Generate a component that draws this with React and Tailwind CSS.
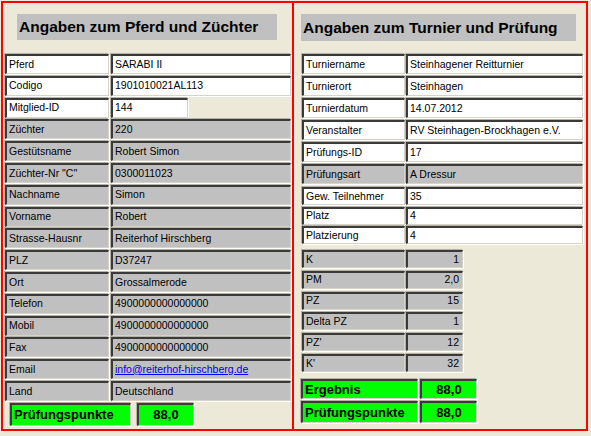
/**
 * Turnier-Ergebnisblatt — zwei Panels: Pferd/Züchter links, Turnier/Prüfung rechts.
 */

const Inset = ({ className = '', children }) => (
  <div
    className={`flex items-center overflow-hidden whitespace-nowrap border-t-2 border-l-2 border-r border-b border-t-[#3a3a3a] border-l-[#3a3a3a] border-r-[#d6d3c8] border-b-[#d6d3c8] shadow-[1px_1px_0_#ffffff,-1px_-1px_0_#b5b2a8] ${className}`}
  >
    {children}
  </div>
);

const left = [
  ['Pferd', 'SARABI II', 'white'],
  ['Codigo', '1901010021AL113', 'white'],
  ['Mitglied-ID', '144', 'short'],
  ['Züchter', '220'],
  ['Gestütsname', 'Robert Simon'],
  ['Züchter-Nr "C"', '0300011023'],
  ['Nachname', 'Simon'],
  ['Vorname', 'Robert'],
  ['Strasse-Hausnr', 'Reiterhof Hirschberg'],
  ['PLZ', 'D37247'],
  ['Ort', 'Grossalmerode'],
  ['Telefon', '4900000000000000'],
  ['Mobil', '4900000000000000'],
  ['Fax', '4900000000000000'],
  ['Email', 'info@reiterhof-hirschberg.de', 'link'],
  ['Land', 'Deutschland'],
];

const rightTop = [
  ['Turniername', 'Steinhagener Reitturnier', true],
  ['Turnierort', 'Steinhagen', true],
  ['Turnierdatum', '14.07.2012', true],
  ['Veranstalter', 'RV Steinhagen-Brockhagen e.V.', true],
  ['Prüfungs-ID', '17', true],
  ['Prüfungsart', 'A Dressur', false],
];

const rightMid = [
  ['Gew. Teilnehmer', '35'],
  ['Platz', '4'],
  ['Platzierung', '4'],
];

const scores = [
  ['K', '1'],
  ['PM', '2,0'],
  ['PZ', '15'],
  ['Delta PZ', '1'],
  ["PZ'", '12'],
  ["K'", '32'],
];

export default function App() {
  return (
    <div className="w-[591px] h-[436px] bg-[#ece9d8] pt-[1px] pl-[1px] text-black font-['Liberation_Sans',Arial,sans-serif] text-[10.5px]">
      <div className="flex w-[587px] h-[430px] border-2 border-[#ff0000]">
        {/* Pferd und Züchter */}
        <div className="flex flex-col w-[291px] border-r-2 border-[#ff0000] pt-[11px]">
          <div className="ml-[14px] w-[260px] h-[26px] bg-[#c0c0c0] flex items-center pl-[2px] text-[15.5px] font-bold">
            Angaben zum Pferd und Züchter
          </div>
          <div className="mt-[14px] ml-[2px] flex flex-col gap-[1.8px]">
            {left.map(([label, value, kind]) => {
              const bg = kind === 'white' || kind === 'short' ? 'bg-white' : 'bg-[#c0c0c0]';
              return (
                <div key={label} className="flex gap-[2px] h-[20px]">
                  <Inset className={`w-[104px] pl-[2px] ${bg}`}>{label}</Inset>
                  <Inset className={`${kind === 'short' ? 'w-[77px]' : 'w-[180px]'} pl-[2px] ${bg}`}>
                    {kind === 'link' ? (
                      <a href="#" className="text-[#0000ee] underline">{value}</a>
                    ) : (
                      value
                    )}
                  </Inset>
                </div>
              );
            })}
          </div>
          <div className="mt-[2px] ml-[7px] flex gap-[6px] h-[23px] text-[13px] font-bold">
            <Inset className="w-[121px] pl-[2px] bg-[#00ff00]">Prüfungspunkte</Inset>
            <Inset className="w-[57px] justify-center bg-[#00ff00]">88,0</Inset>
          </div>
        </div>

        {/* Turnier und Prüfung */}
        <div className="flex flex-col flex-1 pt-[11px]">
          <div className="ml-[7px] w-[275px] h-[27px] bg-[#c0c0c0] flex items-center pl-[2px] text-[15.5px] font-bold">
            Angaben zum Turnier und Prüfung
          </div>
          <div className="mt-[13px] ml-[8px] flex flex-col gap-[2px]">
            {rightTop.map(([label, value, white]) => {
              const bg = white ? 'bg-white' : 'bg-[#c0c0c0]';
              return (
                <div key={label} className="flex gap-[1px] h-[20px]">
                  <Inset className={`w-[103px] pl-[2px] ${bg}`}>{label}</Inset>
                  <Inset className={`w-[177px] pl-[2px] ${bg}`}>{value}</Inset>
                </div>
              );
            })}
          </div>
          <div className="mt-[3px] ml-[8px] flex flex-col gap-[1.5px]">
            {rightMid.map(([label, value]) => (
              <div key={label} className="flex gap-[1px] h-[18px]">
                <Inset className="w-[103px] pl-[2px] bg-white">{label}</Inset>
                <Inset className="w-[177px] pl-[2px] bg-white">{value}</Inset>
              </div>
            ))}
          </div>
          <div className="mt-[6px] ml-[8px] flex flex-col gap-[2.8px]">
            {scores.map(([label, value]) => (
              <div key={label} className="flex gap-[1px] h-[18px]">
                <Inset className="w-[103px] pl-[2px] bg-[#c0c0c0]">{label}</Inset>
                <Inset className="w-[57px] justify-end pr-[3px] bg-[#c0c0c0]">{value}</Inset>
              </div>
            ))}
          </div>
          <div className="mt-[7px] ml-[7px] flex flex-col gap-[2px] text-[13px] font-bold">
            <div className="flex gap-[2px] h-[20px]">
              <Inset className="w-[117px] pl-[2px] bg-[#00ff00]">Ergebnis</Inset>
              <Inset className="w-[57px] justify-center bg-[#00ff00]">88,0</Inset>
            </div>
            <div className="flex gap-[2px] h-[22px]">
              <Inset className="w-[117px] pl-[2px] bg-[#00ff00]">Prüfungspunkte</Inset>
              <Inset className="w-[57px] justify-center bg-[#00ff00]">88,0</Inset>
            </div>
          </div>
        </div>
      </div>
    </div>
  );
}
